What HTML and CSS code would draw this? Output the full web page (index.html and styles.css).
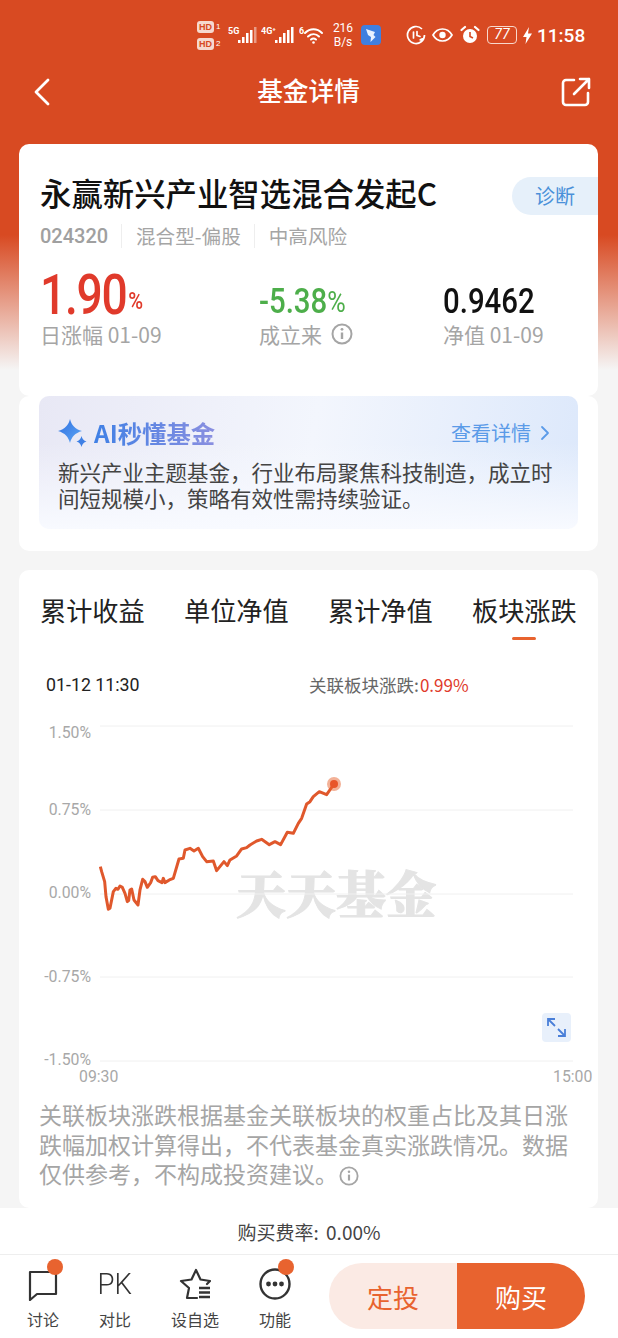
FILE: index.html
```html
<!DOCTYPE html>
<html lang="zh-CN">
<head>
  <meta charset="UTF-8" />
  <meta name="viewport" content="width=device-width, initial-scale=1.0">
  <title>基金详情</title>
  <link rel="stylesheet" href="styles.css">
</head>
<body>
  <div class="page">
    <div class="status-bar">
      <div class="hd-stack">
        <span class="hd-row"><b>HD</b><i>1</i></span>
        <span class="hd-row"><b>HD</b><i>2</i></span>
      </div>
      <svg class="st-signal" width="30" height="20" viewBox="0 0 30 20">
        <text x="0" y="9" class="st-tiny">5G</text>
        <rect x="10" y="15" width="2.5" height="3" fill="#fff"/>
        <rect x="14" y="12" width="2.5" height="6" fill="#fff"/>
        <rect x="18" y="8" width="2.5" height="10" fill="#fff"/>
        <rect x="22" y="5" width="2.5" height="13" fill="#fff"/>
        <rect x="26" y="2" width="2.5" height="16" fill="#fff" opacity=".45"/>
      </svg>
      <svg class="st-signal" width="34" height="20" viewBox="0 0 34 20">
        <text x="0" y="9" class="st-tiny">4G⁺</text>
        <rect x="14" y="15" width="2.5" height="3" fill="#fff"/>
        <rect x="18" y="12" width="2.5" height="6" fill="#fff"/>
        <rect x="22" y="8" width="2.5" height="10" fill="#fff"/>
        <rect x="26" y="5" width="2.5" height="13" fill="#fff"/>
        <rect x="30" y="2" width="2.5" height="16" fill="#fff"/>
      </svg>
      <svg class="st-wifi" width="26" height="20" viewBox="0 0 26 20" fill="none" stroke="#fff" stroke-width="2" stroke-linecap="round">
        <text x="0" y="9" class="st-tiny" stroke="none">6</text>
        <path d="M6 8c5-5 12-5 17 0"/>
        <path d="M9 11.500c3.500-3 8-3 11 0"/>
        <path d="M12 14.500c1.500-1.300 3.500-1.300 5 0"/>
        <circle cx="14.500" cy="17.500" r="1.300" fill="#fff" stroke="none"/>
      </svg>
      <div class="net-speed"><span>216</span><span>B/s</span></div>
      <svg class="st-app" width="20" height="20" viewBox="0 0 20 20">
        <rect width="20" height="20" rx="4" fill="#3f7fe0"/>
        <path d="M5 4l9 3-1.500 3 2 2-5 5 .5-5-3-2z" fill="#e8f1ff"/>
      </svg>
      <svg class="st-saver" width="20" height="20" viewBox="0 0 20 20" fill="none" stroke="#fff" stroke-width="1.700">
        <path d="M16 4A8.500 8.500 0 1 0 18.500 10"/>
        <path d="M7.500 7v6M11 6.500v4l3 1" stroke-linecap="round"/>
        <path d="M13 15c2-2 3-2 5-2-.5 2-2 4-5 2z" fill="#fff" stroke="none"/>
      </svg>
      <svg class="st-eye" width="21" height="16" viewBox="0 0 21 16" fill="none" stroke="#fff" stroke-width="1.700">
        <path d="M1 8c4.500-8 14.500-8 19 0-4.500 8-14.500 8-19 0z"/>
        <circle cx="10.500" cy="8" r="3.200" fill="#fff" stroke="none"/>
      </svg>
      <svg class="st-alarm" width="20" height="20" viewBox="0 0 20 20" fill="none" stroke="#fff">
        <circle cx="10" cy="11" r="7" fill="#fff" stroke="none"/>
        <path d="M10 7v4.500l3 1.500" stroke="#d84a22" stroke-width="1.600"/>
        <path d="M1.500 5L5 2M18.500 5L15 2" stroke-width="2.200" stroke-linecap="round"/>
      </svg>
      <div class="battery"><span>77</span></div>
      <svg class="st-bolt" width="9" height="17" viewBox="0 0 9 17"><path d="M6 0L0 10h3.500L2.500 17 9 6.500H5z" fill="#fff"/></svg>
      <span class="st-time">11:58</span>
    </div>

    <div class="nav-bar">
      <svg class="nav-back" width="18" height="28" viewBox="0 0 18 28" fill="none" stroke="#fff" stroke-width="2.800" stroke-linecap="round" stroke-linejoin="round"><path d="M15 2L3 14l12 12"/></svg>
      <span class="nav-title">基金详情</span>
      <svg class="nav-share" width="30" height="30" viewBox="0 0 30 30" fill="none" stroke="#fff" stroke-width="2.600" stroke-linecap="round" stroke-linejoin="round">
        <path d="M13 3H5a3 3 0 0 0-3 3v19a3 3 0 0 0 3 3h19a3 3 0 0 0 3-3v-9"/>
        <path d="M13 17L28 2M19 2h9v9"/>
      </svg>
    </div>

    <div class="card fund-card">
      <div class="diag-pill">诊断</div>
      <h1 class="fund-name">永赢新兴产业智选混合发起C</h1>
      <div class="fund-tags">
        <span class="fund-code">024320</span>
        <span class="fund-tag">混合型-偏股</span>
        <span class="fund-tag">中高风险</span>
      </div>
      <div class="metrics">
        <div class="metric metric-day">
          <div class="metric-value red big">1.90<small>%</small></div>
          <div class="metric-label">日涨幅 01-09</div>
        </div>
        <div class="metric metric-since">
          <div class="metric-value green">-5.38<small>%</small></div>
          <div class="metric-label">成立来
            <svg class="info-icon" width="22" height="22" viewBox="0 0 22 22" fill="none" stroke="#a5a5a5" stroke-width="2"><circle cx="11" cy="11" r="9.500"/><path d="M11 9.500v6.500" stroke-width="2.400"/><circle cx="11" cy="6.300" r="1.400" fill="#a5a5a5" stroke="none"/></svg>
          </div>
        </div>
        <div class="metric metric-nav">
          <div class="metric-value">0.9462</div>
          <div class="metric-label">净值 01-09</div>
        </div>
      </div>
    </div>

    <div class="card ai-card">
      <div class="ai-box">
        <div class="ai-head">
          <svg class="ai-star" width="32" height="30" viewBox="0 0 32 30">
            <defs><linearGradient id="aiStar" x1="0" y1="0" x2="1" y2="1"><stop offset="0" stop-color="#2f6fe0"/><stop offset="1" stop-color="#5fa8f5"/></linearGradient></defs>
            <path d="M12 1c1.500 6 5 10 12 12-7 2-10.500 6-12 12C10.500 19 7 15 0 13 7 11 10.500 7 12 1z" fill="url(#aiStar)"/>
            <path d="M23.500 18c.7 3 2.300 4.500 5 5.500-2.700 1-4.300 2.500-5 5.500-.7-3-2.300-4.500-5-5.500 2.700-1 4.300-2.500 5-5.500z" fill="#3f80e5"/>
          </svg>
          <span class="ai-title">AI秒懂基金</span>
          <span class="ai-more">查看详情</span>
          <svg class="ai-chevron" width="10" height="16" viewBox="0 0 10 16" fill="none" stroke="#5b9be8" stroke-width="1.800" stroke-linecap="round" stroke-linejoin="round"><path d="M2 2l6 6-6 6"/></svg>
        </div>
        <p class="ai-text">新兴产业主题基金，行业布局聚焦科技制造，成立时间短规模小，策略有效性需持续验证。</p>
      </div>
    </div>

    <div class="card chart-card">
      <div class="tabs">
        <span class="tab">累计收益</span>
        <span class="tab">单位净值</span>
        <span class="tab">累计净值</span>
        <span class="tab active">板块涨跌</span>
      </div>
      <div class="chart-info">
        <span class="chart-time">01-12 11:30</span>
        <span class="chart-rise">关联板块涨跌:<em>0.99%</em></span>
      </div>
      <svg class="chart" width="579" height="380" viewBox="0 0 579 380">
        <text x="217" y="203" class="watermark">天天基金</text>
        <g stroke="#f0f0f0" stroke-width="1">
          <line x1="81" y1="16" x2="554" y2="16"/>
          <line x1="81" y1="100" x2="554" y2="100"/>
          <line x1="81" y1="184" x2="554" y2="184"/>
          <line x1="81" y1="267" x2="554" y2="267"/>
          <line x1="81" y1="351" x2="554" y2="351"/>
        </g>
        <text x="72" y="28" class="axis end">1.50%</text>
        <text x="72" y="105" class="axis end">0.75%</text>
        <text x="72" y="188" class="axis end">0.00%</text>
        <text x="72" y="272" class="axis end">-0.75%</text>
        <text x="72" y="355" class="axis end">-1.50%</text>
        <text x="60" y="372" class="axis">09:30</text>
        <text x="534" y="372" class="axis">15:00</text>
        <polyline transform="translate(11 -50) scale(.3333)" fill="none" stroke="#e0582c" stroke-width="9" stroke-linejoin="round" points="211,620 215,635 224,665 228,710 235,748 240,745 250,695 258,685 264,688 270,678 277,682 285,700 292,725 296,722 300,690 305,687 312,720 324,735 330,690 338,658 345,665 352,682 362,668 368,652 376,650 384,662 396,668 400,655 405,668 418,660 430,655 447,597 460,595 465,570 480,565 492,573 505,565 518,590 530,605 550,603 560,632 582,605 592,617 600,600 620,588 635,567 650,563 660,555 680,543 695,538 718,554 735,545 752,554 772,517 790,520 805,490 815,475 830,432 840,425 850,410 868,395 890,404 912,372"/>
        <circle cx="315" cy="74" r="7" fill="#e8632f" opacity=".5"/>
        <circle cx="315" cy="74" r="4" fill="#e8562a"/>
        <rect x="523" y="303" width="29" height="29" rx="4" fill="#e8f0fb"/>
        <g fill="none" stroke="#4a7fd8" stroke-width="1.800">
          <path d="M529 316v-7h7M529 309l7 7"/>
          <path d="M546 319v7h-7M546 326l-7-7"/>
        </g>
      </svg>
      <p class="chart-note">关联板块涨跌根据基金关联板块的权重占比及其日涨跌幅加权计算得出，不代表基金真实涨跌情况。数据仅供参考，不构成投资建议。<svg class="note-icon" width="20" height="20" viewBox="0 0 22 22" fill="none" stroke="#a5a5a5" stroke-width="2"><circle cx="11" cy="11" r="9.500"/><path d="M11 9.500v6.500" stroke-width="2.400"/><circle cx="11" cy="6.300" r="1.400" fill="#a5a5a5" stroke="none"/></svg></p>
    </div>

    <div class="footer">
      <div class="fee-row">购买费率: 0.00%</div>
      <div class="toolbar">
        <div class="tool tool-talk">
          <span class="dot"></span>
          <svg width="32" height="34" viewBox="0 0 32 34" fill="none" stroke="#333" stroke-width="2.200" stroke-linejoin="round"><path d="M3 5h26v22H10l-7 6z"/></svg>
          <span class="tool-label">讨论</span>
        </div>
        <div class="tool tool-pk">
          <span class="pk-text">PK</span>
          <span class="tool-label">对比</span>
        </div>
        <div class="tool tool-fav">
          <svg width="34" height="34" viewBox="0 0 34 34" fill="none" stroke="#333" stroke-width="2.200" stroke-linejoin="round" stroke-linecap="round">
            <path d="M19 31H9l2-10-8-7 10.500-1.500L18 3l4.500 9.500L32 14l-3 3"/>
            <path d="M21 21h11M21 25.500h11M21 30h11" stroke-width="2.400" stroke-linecap="butt"/>
          </svg>
          <span class="tool-label">设自选</span>
        </div>
        <div class="tool tool-more">
          <span class="dot"></span>
          <svg width="34" height="34" viewBox="0 0 34 34" fill="none" stroke="#333" stroke-width="2.400"><circle cx="17" cy="17" r="14.500"/><g fill="#333" stroke="none"><circle cx="10.500" cy="17" r="2.400"/><circle cx="17" cy="17" r="2.400"/><circle cx="23.500" cy="17" r="2.400"/></g></svg>
          <span class="tool-label">功能</span>
        </div>
        <div class="buy-group">
          <button class="buy-plan">定投</button>
          <button class="buy-now">购买</button>
        </div>
      </div>
    </div>
  </div>
</body>
</html>
```

FILE: styles.css
```css
* {
  box-sizing: border-box;
}
body {
  margin: 0;
  font-family: "Noto Sans CJK SC", "Noto Sans", sans-serif;
  color: #333;
}
.page {
  width: 618px;
  height: 1338px;
  overflow: hidden;
  background: linear-gradient(#d84a22 0, #d84a22 235px, #f5f5f5 370px);
}

/* status bar */
.status-bar {
  height: 70px;
  display: flex;
  align-items: center;
  padding-left: 197px;
  color: #fff;
}
.hd-stack {
  width: 26px;
  display: flex;
  flex-direction: column;
  gap: 5px;
}
.hd-row {
  display: flex;
  align-items: center;
  gap: 2px;
  line-height: 12px;
}
.hd-row b {
  font: bold 9px/12px "Liberation Sans", sans-serif;
  color: #d84a22;
  background: #f6d9cf;
  border-radius: 3px;
  padding: 0 2px;
}
.hd-row i {
  font: normal 8px/12px "Liberation Sans", sans-serif;
}
.st-tiny {
  font: bold 9px "Roboto", sans-serif;
  fill: #fff;
}
.st-signal {
  margin-left: 5px;
}
.st-signal + .st-signal {
  margin-left: 3px;
}
.st-wifi {
  margin-left: 4px;
}
.net-speed {
  width: 24px;
  margin-left: 6px;
  display: flex;
  flex-direction: column;
  align-items: center;
  font: 12px/14px "Roboto", sans-serif;
}
.st-app {
  margin-left: 6px;
}
.st-saver {
  margin-left: 25px;
}
.st-eye {
  margin-left: 6px;
}
.st-alarm {
  margin-left: 7px;
}
.battery {
  width: 30px;
  height: 18px;
  margin-left: 7px;
  border: 1.500px solid #f8d8cc;
  border-radius: 4px;
  font: italic 14px/15px "Roboto", sans-serif;
  text-align: center;
}
.st-bolt {
  margin-left: 6px;
}
.st-time {
  margin-left: 5px;
  font: 500 19px "Roboto", sans-serif;
}

/* nav */
.nav-bar {
  height: 44px;
  margin-bottom: 30px;
  padding: 0 27px 0 33px;
  display: flex;
  align-items: center;
  justify-content: space-between;
}
.nav-title {
  margin: -4px 0 0 5px;
  font-size: 25.700px;
  line-height: 36px;
  font-weight: 500;
  color: #fff;
}

/* cards */
.card {
  width: 579px;
  margin-left: 19px;
  background: #fff;
  border-radius: 10px;
}
.fund-card {
  position: relative;
  height: 252px;
  padding: 30px 0 0 21px;
}
.diag-pill {
  position: absolute;
  right: 0;
  top: 33px;
  width: 86px;
  height: 38px;
  padding-left: 23px;
  background: #e6f0fa;
  border-radius: 19px 0 0 19px;
  font-size: 20px;
  line-height: 38px;
  color: #4a90d9;
}
.fund-name {
  margin: 0;
  font-size: 31.400px;
  line-height: 38px;
  font-weight: 500;
  color: #111;
}
.fund-tags {
  display: flex;
  align-items: center;
  margin-top: 12px;
  height: 24px;
}
.fund-code {
  width: 81px;
  font: 500 20px "Roboto", sans-serif;
  color: #a0a0a0;
}
.fund-tag {
  font-size: 19.600px;
  line-height: 24px;
  color: #a5a5a5;
  padding-left: 14px;
  padding-right: 13px;
  border-left: 1px solid #eee;
}
.metrics {
  display: flex;
  margin-top: 24px;
}
.metric-day {
  width: 219px;
}
.metric-since {
  width: 184px;
}
.metric-value {
  height: 47px;
  display: flex;
  align-items: flex-end;
  font: 500 35px/34px "Roboto", sans-serif;
  color: #111;
  transform: scaleX(.84);
  transform-origin: left center;
}
.metric-value small {
  font-size: 30px;
  font-weight: 400;
  line-height: 34px;
}
.metric-value.big {
  font-size: 55px;
  line-height: 47px;
  font-weight: 500;
  letter-spacing: -1.500px;
}
.metric-value.big small {
  font-size: 24px;
  letter-spacing: 0;
  margin-left: 2px;
  line-height: 36px;
  font-weight: 500;
}
.red {
  color: #e03a2b;
}
.green {
  color: #4dae4a;
}
.metric-label {
  display: flex;
  align-items: center;
  gap: 9px;
  font-size: 21px;
  line-height: 30px;
  color: #a5a5a5;
}

.ai-card {
  height: 155px;
  margin-bottom: 19px;
  padding: 0 20px;
}
.ai-box {
  height: 133px;
  padding: 21px 19px 0;
  border-radius: 10px;
  background: linear-gradient(to bottom, rgba(247, 250, 255, 0) 35%, #f8faff 100%), linear-gradient(100deg, #e8e8f5 0, #f3f6fd 50%, #dce8fb 100%);
}
.ai-head {
  display: flex;
  align-items: center;
  height: 32px;
}
.ai-title {
  margin-left: 4px;
  font-size: 24.400px;
  line-height: 32px;
  font-weight: 700;
  background: linear-gradient(90deg, #3f80e5, #8a8fe0);
  -webkit-background-clip: text;
  background-clip: text;
  color: transparent;
}
.ai-more {
  margin-left: auto;
  font-size: 20px;
  color: #5b9be8;
  line-height: 32px;
}
.ai-chevron {
  margin: 0 9px 0 9px;
}
.ai-text {
  margin: 10px 0 0;
  font-size: 21.500px;
  line-height: 26px;
  color: #444;
}

/* chart card */
.chart-card {
  position: relative;
  height: 638px;
  padding-top: 22px;
}
.tabs {
  display: flex;
  padding-left: 21px;
  gap: 39px;
}
.tab {
  position: relative;
  width: 105px;
  height: 48px;
  font-size: 26.200px;
  line-height: 36px;
  color: #222;
  white-space: nowrap;
}
.tab.active::after {
  content: "";
  position: absolute;
  left: 40px;
  bottom: 0;
  width: 24px;
  height: 3px;
  border-radius: 2px;
  background: #e8632f;
}
.chart-info {
  display: flex;
  height: 24px;
  margin-top: 32px;
  padding-left: 27px;
  align-items: center;
}
.chart-time {
  width: 263px;
  font: 17.800px "Roboto", sans-serif;
  color: #222;
}
.chart-rise {
  font-size: 17.500px;
  color: #666;
}
.chart-rise em {
  margin-left: 1px;
  font-size: 17px;
  font-style: normal;
  color: #e03a2b;
}
.chart {
  display: block;
  margin-top: 14px;
}
.axis {
  font: 15.800px "Roboto", sans-serif;
  fill: #a8a8a8;
}
.axis.end {
  text-anchor: end;
}
.watermark {
  font-family: "Noto Serif CJK SC", "Noto Sans CJK SC", serif;
  font-size: 50px;
  font-weight: 900;
  fill: #e4e4e4;
  stroke: #e4e4e4;
  stroke-width: 1px;
}
.chart-note {
  margin: 10px 0 0;
  padding: 0 20px;
  font-size: 23px;
  line-height: 29.500px;
  color: #a5a5a5;
}
.note-icon {
  vertical-align: -3px;
  margin-left: 1px;
}

/* footer */
.footer {
  height: 130px;
  background: #fff;
}
.fee-row {
  height: 47px;
  border-bottom: 1px solid #eee;
  text-align: center;
  font-size: 19px;
  line-height: 47px;
  word-spacing: 3px;
  color: #444;
}
.toolbar {
  display: flex;
  height: 83px;
  align-items: flex-start;
  padding-left: 7px;
}
.tool {
  position: relative;
  width: 72px;
  display: flex;
  flex-direction: column;
  align-items: center;
  padding-top: 12px;
}
.tool svg,
.pk-text {
  height: 34px;
}
.tool-label {
  margin-top: 7px;
  font-size: 16px;
  line-height: 22px;
  color: #444;
}
.pk-text {
  font: 300 30px/34px "Roboto", sans-serif;
  color: #333;
  transform: scaleX(.92);
}
.dot {
  position: absolute;
  left: 40px;
  top: 4px;
  width: 16px;
  height: 16px;
  border-radius: 50%;
  background: #e8632f;
}
.tool-fav {
  width: 88px;
}
.tool-more .dot {
  left: 39px;
}
.buy-group {
  display: flex;
  margin-left: 18px;
  margin-top: 8px;
}
.buy-group button {
  height: 66px;
  border: none;
  font-family: inherit;
  font-size: 26px;
}
.buy-plan {
  width: 128px;
  border-radius: 33px 0 0 33px;
  background: #fbeae4;
  color: #e8632f;
}
.buy-now {
  width: 128px;
  border-radius: 0 33px 33px 0;
  background: #e8632f;
  color: #fff;
}
```
